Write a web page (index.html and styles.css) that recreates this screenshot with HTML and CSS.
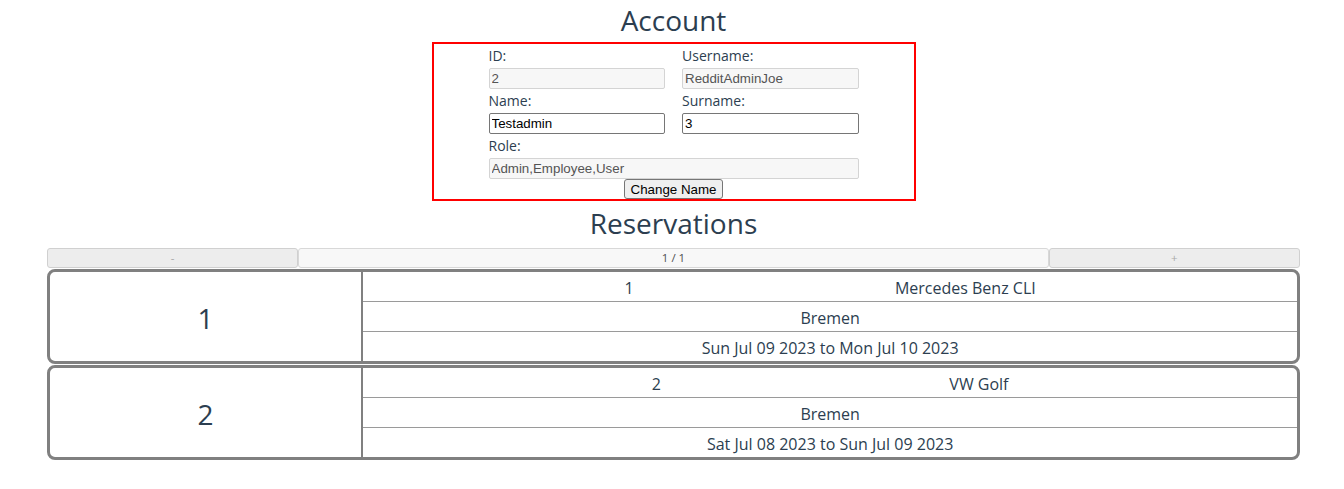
FILE: index.html
```html
<!DOCTYPE html>
<html lang="en">
<head>
<meta charset="utf-8">
<title>Account</title>
<link rel="stylesheet" href="styles.css">
</head>
<body>
<div class="page">
  <h1 class="title">Account</h1>
  <div class="account">
    <div class="form-grid">
      <div class="field"><label class="lbl">ID:</label><input class="inp" disabled value="2"></div>
      <div class="field"><label class="lbl">Username:</label><input class="inp" disabled value="RedditAdminJoe"></div>
      <div class="field"><label class="lbl">Name:</label><input class="inp" value="Testadmin"></div>
      <div class="field"><label class="lbl">Surname:</label><input class="inp" value="3"></div>
      <div class="field wide"><label class="lbl">Role:</label><input class="inp" disabled value="Admin,Employee,User"></div>
    </div>
    <button class="btn-change">Change Name</button>
  </div>
  <h1 class="title res-title">Reservations</h1>
  <div class="pager">
    <button class="pg side" disabled>-</button>
    <div class="pg mid">1 / 1</div>
    <button class="pg side" disabled>+</button>
  </div>
  <div class="card">
    <div class="card-id">1</div>
    <div class="card-info">
      <div class="row row-split"><span>1</span><span>Mercedes Benz CLI</span></div>
      <div class="row">Bremen</div>
      <div class="row">Sun Jul 09 2023 to Mon Jul 10 2023</div>
    </div>
  </div>
  <div class="card">
    <div class="card-id">2</div>
    <div class="card-info">
      <div class="row row-split"><span>2</span><span>VW Golf</span></div>
      <div class="row">Bremen</div>
      <div class="row">Sat Jul 08 2023 to Sun Jul 09 2023</div>
    </div>
  </div>
</div>
</body>
</html>
```
FILE: styles.css
```css
html, body {
  margin: 0;
  padding: 0;
  background: #ffffff;
}

body {
  font-family: "Open Sans", "Noto Sans", sans-serif;
  color: #2c3e50;
  text-align: center;
}

.page {
  margin: 0 44px 0 47px;
}

.title {
  margin: 0 0 2px 0;
  font-size: 28px;
  font-weight: 400;
  line-height: 40px;
}

.res-title {
  margin: 2px 0 5px 0;
}

.account {
  width: 480px;
  margin: 0 auto;
  border: 2px solid #ff0000;
  display: flex;
  flex-direction: column;
  align-items: center;
}

.form-grid {
  width: 370px;
  display: grid;
  grid-template-columns: 1fr 1fr;
  column-gap: 17px;
  text-align: left;
}

.field {
  display: flex;
  flex-direction: column;
}

.wide {
  grid-column: 1 / 3;
}

.lbl {
  font-size: 14px;
  line-height: 24px;
  color: #2c3e50;
}

.inp {
  box-sizing: border-box;
  width: 100%;
  height: 21px;
  margin: 0;
  padding: 1px 2px;
  border: 1px solid #767676;
  border-radius: 2px;
  background: #ffffff;
  font-family: "Liberation Sans", Arial, sans-serif;
  font-size: 13.333px;
  color: #000000;
}

.inp:disabled {
  background: #f7f7f7;
  border-color: #d4d4d4;
  color: #545454;
}

.btn-change {
  box-sizing: border-box;
  height: 20px;
  margin: 0;
  padding: 0 6px;
  border: 1px solid #767676;
  border-radius: 3px;
  background: #efefef;
  font-family: "Liberation Sans", Arial, sans-serif;
  font-size: 13.333px;
  color: #000000;
}

.pager {
  display: flex;
  height: 20px;
  margin-bottom: 1px;
}

.pg {
  box-sizing: border-box;
  height: 20px;
  margin: 0;
  padding: 0;
  border: 1px solid #d0d0d0;
  border-radius: 3px;
  font-family: "Open Sans", sans-serif;
  font-size: 11.5px;
  line-height: 18px;
}

.side {
  flex: 1;
  background: #ededed;
  color: #a8a8a8;
}

.mid {
  flex: 3;
  background: #f8f8f8;
  color: #4f4f4f;
  border-color: #d8d8d8;
}

.card {
  display: flex;
  border: 3px solid #808080;
  border-radius: 8px;
  margin-bottom: 1px;
}

.card-id {
  flex: 1;
  display: flex;
  align-items: center;
  justify-content: center;
  padding-top: 2px;
  border-right: 2px solid #808080;
  font-size: 28px;
}

.card-info {
  flex: 3;
  display: flex;
  flex-direction: column;
}

.row {
  height: 27px;
  padding-top: 2px;
  line-height: 28px;
  font-size: 16px;
}

.row + .row {
  border-top: 1px solid #9a9a9a;
}

.row-split {
  display: flex;
  justify-content: space-evenly;
}
```
